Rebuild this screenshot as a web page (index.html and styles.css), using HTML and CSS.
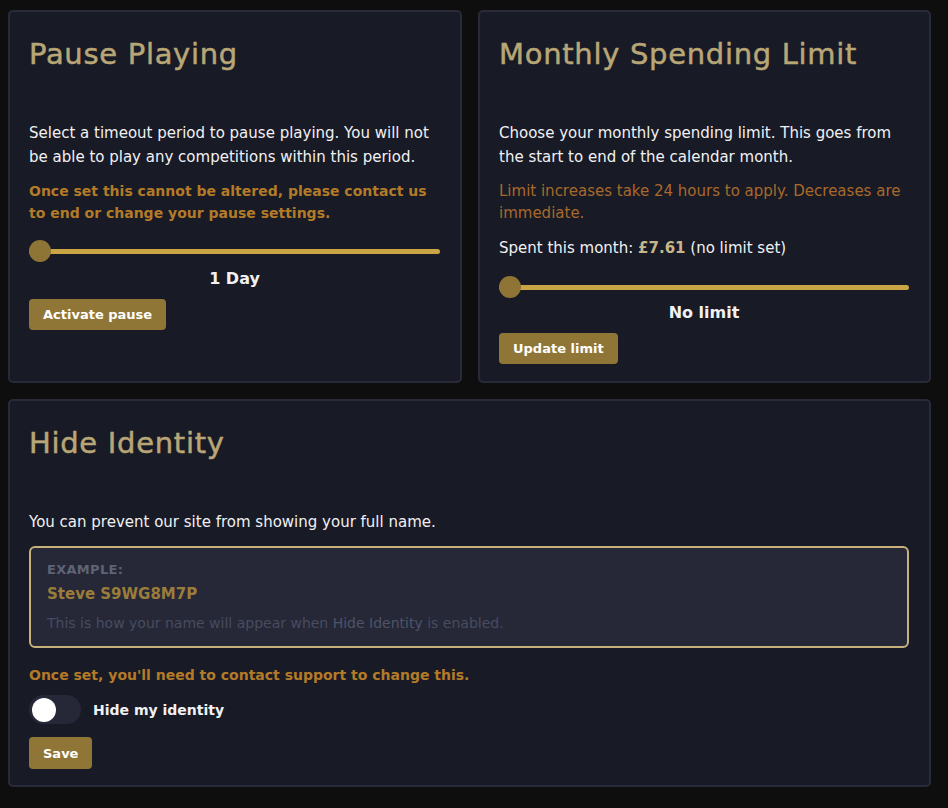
FILE: index.html
```html
<!DOCTYPE html>
<html lang="en">

<head>
    <meta charset="UTF-8">
    <meta name="viewport" content="width=device-width, initial-scale=1.0">
    <link rel="stylesheet" href="styles.css">
</head>

<body>
    <div class="settings">
        <div class="card">
            <h2 class="card-title">Pause Playing</h2>
            <p class="card-text">Select a timeout period to pause playing. You will not be able to play any competitions within this period.</p>
            <p class="warning">Once set this cannot be altered, please contact us to end or change your pause settings.</p>
            <div class="slider">
                <div class="slider-track"></div>
                <div class="slider-thumb"></div>
            </div>
            <div class="slider-value value-pause">1 Day</div>
            <button class="btn">Activate pause</button>
        </div>

        <div class="card">
            <h2 class="card-title">Monthly Spending Limit</h2>
            <p class="card-text">Choose your monthly spending limit. This goes from the start to end of the calendar month.</p>
            <p class="notice">Limit increases take 24 hours to apply. Decreases are immediate.</p>
            <p class="spent">Spent this month: <strong>&pound;7.61</strong> (no limit set)</p>
            <div class="slider slider-limit">
                <div class="slider-track"></div>
                <div class="slider-thumb"></div>
            </div>
            <div class="slider-value value-limit">No limit</div>
            <button class="btn">Update limit</button>
        </div>

        <div class="card card-wide">
            <h2 class="card-title">Hide Identity</h2>
            <p class="card-text">You can prevent our site from showing your full name.</p>
            <div class="example">
                <div class="example-label">EXAMPLE:</div>
                <div class="example-name">Steve S9WG8M7P</div>
                <div class="example-hint">This is how your name will appear when <span>Hide Identity</span> is enabled.</div>
            </div>
            <p class="warning warning-single">Once set, you'll need to contact support to change this.</p>
            <label class="toggle-row">
                <span class="toggle"><span class="toggle-knob"></span></span>
                <span class="toggle-label">Hide my identity</span>
            </label>
            <button class="btn btn-save">Save</button>
        </div>
    </div>
</body>

</html>
```

FILE: styles.css
```css
/* page */
body {
    margin: 0;
    background-color: #0e0e0f;
    font-family: "DejaVu Sans", sans-serif;
    color: #f1f1f3;
}

.settings {
    width: 923px;
    margin: 10px 0 0 8px;
    display: grid;
    grid-template-columns: 454px 453px;
    column-gap: 16px;
    row-gap: 16px;
}

.card {
    background-color: #181a26;
    border: 2px solid #282a3a;
    border-radius: 5px;
    padding: 20px 20px 17px 19px;
}

.card-wide {
    grid-column: 1 / 3;
    padding-bottom: 16px;
}

.card-title {
    margin: 0 0 50px;
    padding-top: 5px;
    font-size: 29px;
    line-height: 34px;
    font-weight: normal;
    letter-spacing: 0.7px;
    color: #b8a676;
    -webkit-text-stroke: 0.5px #b8a676;
}

.card-text {
    margin: 0;
    font-size: 15px;
    line-height: 24px;
}

.warning {
    margin: 11px 0 0;
    font-size: 14px;
    line-height: 22px;
    font-weight: bold;
    color: #b37a28;
}

.notice {
    margin: 11px 0 0;
    font-size: 15px;
    line-height: 22px;
    color: #a8692a;
}

.spent {
    margin: 12px 0 0;
    font-size: 15px;
    line-height: 24px;
}

.spent strong {
    color: #c7b689;
}

/* range slider */
.slider {
    position: relative;
    height: 22px;
    margin-top: 16px;
    display: flex;
    align-items: center;
}

.slider-track {
    width: 100%;
    height: 5px;
    border-radius: 3px;
    background-color: #c9a545;
}

.slider-thumb {
    position: absolute;
    left: 0;
    top: 0;
    width: 22px;
    height: 22px;
    border-radius: 50%;
    background-color: #8e7435;
}

.slider-value {
    text-align: center;
    font-size: 16px;
    line-height: 24px;
    font-weight: bold;
}

.value-pause {
    margin: 5px 0 8px;
}

.value-limit {
    margin: 3px 0 8px;
}

.btn {
    display: block;
    height: 31px;
    padding: 0 14px;
    border: none;
    border-radius: 4px;
    background-color: #8f7636;
    color: white;
    font-family: inherit;
    font-size: 13px;
    font-weight: bold;
    cursor: pointer;
}

/* hide identity */
.example {
    margin-top: 12px;
    padding: 14px 16px 13px;
    border: 2px solid #c6b17d;
    border-radius: 6px;
    background-color: #262837;
}

.example-label {
    font-size: 13px;
    line-height: 16px;
    font-weight: bold;
    letter-spacing: 0.3px;
    color: #5e6376;
}

.example-name {
    margin-top: 4px;
    font-size: 15px;
    line-height: 24px;
    font-weight: bold;
    color: #9a7d3a;
}

.example-hint {
    margin-top: 7px;
    font-size: 14px;
    line-height: 20px;
    color: #474c60;
}

.example-hint span {
    color: #4d5468;
}

.warning-single {
    margin-top: 16px;
}

.toggle-row {
    display: flex;
    align-items: center;
    gap: 12px;
    margin-top: 9px;
}

.toggle {
    position: relative;
    width: 52px;
    height: 29px;
    border-radius: 15px;
    background-color: #262837;
}

.toggle-knob {
    position: absolute;
    left: 3px;
    top: 3px;
    width: 24px;
    height: 24px;
    border-radius: 50%;
    background-color: white;
}

.toggle-label {
    font-size: 14px;
    font-weight: bold;
}

.btn-save {
    margin-top: 13px;
    height: 32px;
}
```
